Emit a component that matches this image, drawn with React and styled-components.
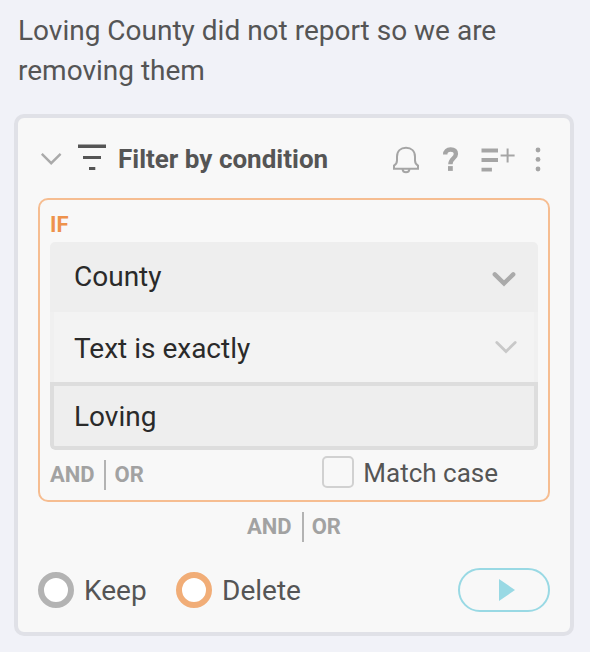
import React from 'react';
import styled, { createGlobalStyle } from 'styled-components';

const GlobalStyle = createGlobalStyle`
  * { box-sizing: border-box; }
  body {
    margin: 0;
    background: #f1f2f8;
    font-family: Roboto, "Liberation Sans", sans-serif;
    color: #555;
  }
`;

const Page = styled.main`
  width: 590px;
  height: 652px;
  padding: 11px 16px 16px 14px;
  background: #f1f2f8;
  overflow: hidden;
`;

const Note = styled.p`
  height: 103px;
  margin: 0;
  padding-left: 4px;
  font-size: 28px;
  line-height: 40px;
`;

const Card = styled.section`
  display: flex;
  flex-direction: column;
  height: 522px;
  padding: 0 20px;
  border: 4px solid #e0e1e7;
  border-radius: 10px;
  background: #f8f8f8;
`;

const Header = styled.header`
  display: flex;
  align-items: center;
  height: 80px;
`;

const Icon = styled.svg`
  display: block;
  flex: none;
  margin-left: ${({ $gap }) => $gap || 0}px;
`;

const Title = styled.h1`
  margin: 2px 0 0 11px;
  font-size: 26px;
  line-height: 36px;
  font-weight: 700;
  white-space: nowrap;
`;

const Actions = styled.div`
  display: flex;
  margin-left: auto;
`;

const Condition = styled.div`
  height: 304px;
  padding: 10px;
  border: 2px solid #f6bd91;
  border-radius: 10px;
`;

const Keyword = styled.div`
  height: 32px;
  font-size: 22px;
  line-height: 30px;
  font-weight: 700;
  color: #ee924c;
`;

const Fields = styled.div`
  border-radius: 5px;
  overflow: hidden;
`;

const Field = styled.div`
  display: flex;
  align-items: center;
  justify-content: space-between;
  height: 70px;
  padding: 0 20px 2px 24px;
  background: #eee;
  font-size: 28px;
  color: #2a2a2a;
`;

const OperatorField = styled(Field)`
  padding: 2px 14px 0 20px;
  border: solid #f0f0f0;
  border-width: 0 4px;
  background: #f3f3f3;
`;

const ValueField = styled(Field)`
  height: 68px;
  padding: 0 20px;
  border: 4px solid #ddd;
  border-radius: 0 0 5px 5px;
`;

const ConditionFooter = styled.div`
  display: flex;
  justify-content: space-between;
  padding: 6px 40px 0 0;
`;

const Joiner = styled.div`
  display: flex;
  align-items: center;
  align-self: ${({ $centered }) => ($centered ? 'center' : 'auto')};
  height: 30px;
  margin-top: ${({ $top }) => $top || 0}px;
  font-size: 22px;
  line-height: 30px;
  font-weight: 700;
  color: #a2a2a2;
`;

const Divider = styled.span`
  width: 2px;
  height: 30px;
  margin: ${({ $centered }) => ($centered ? '0 8px 0 10px' : '0 9px')};
  background: #b3b3b3;
`;

const Check = styled.div`
  display: flex;
  align-items: center;
  height: 32px;
  font-size: 26px;
  line-height: 32px;
`;

const Box = styled.span`
  width: 32px;
  height: 32px;
  margin-right: 9px;
  border: 2px solid #d1d1d1;
  border-radius: 5px;
`;

const CheckLabel = styled.span`
  padding-top: 2px;
`;

const Footer = styled.footer`
  display: flex;
  align-items: center;
  height: 44px;
  margin-top: 26px;
`;

const Choice = styled.div`
  display: flex;
  align-items: center;
  width: 138px;
  font-size: 28px;
`;

const ChoiceLabel = styled.span`
  padding-top: 1px;
  line-height: 33px;
`;

const Radio = styled.span`
  width: 36px;
  height: 36px;
  margin-right: 10px;
  border: 6px solid ${({ $color }) => $color};
  border-radius: 50%;
  background: #fff;
`;

const Run = styled.button`
  display: flex;
  align-items: center;
  justify-content: center;
  width: 92px;
  height: 44px;
  margin-left: auto;
  padding: 0 0 0 5px;
  border: 2px solid #99d9e4;
  border-radius: 22px;
  background: transparent;
`;

function Chevron({ color, weight, drop }) {
  return (
    <Icon width="28" height="22" fill="none" stroke={color} strokeWidth={weight} strokeLinecap="round">
      <path d={`M4.8 ${drop}l9.2 9 9.2-9`} />
    </Icon>
  );
}

function AndOr({ $centered, $top }) {
  return (
    <Joiner $centered={$centered} $top={$top}>
      <span>AND</span>
      <Divider $centered={$centered} />
      <span>OR</span>
    </Joiner>
  );
}

export default function App() {
  return (
    <>
      <GlobalStyle />
      <Page>
        <Note>
          Loving County did not report so we are
          <br />
          removing them
        </Note>
        <Card>
          <Header>
            <Icon width="26" height="40" fill="none" stroke="#aaa" strokeWidth="2.4">
              <path d="M3.8 15.8l9.4 9.4 9.4-9.4" />
            </Icon>
            <Icon $gap={13} width="30" height="40" fill="#555">
              <path d="M1 6.5h28V10H1zM6 18h18v3H6zM12 29h6.3v3H12z" />
            </Icon>
            <Title>Filter by condition</Title>
            <Actions>
              <Icon width="28" height="40" fill="none" stroke="#a5a5a5" strokeWidth="2">
                <path d="M2 30.7v-3.1c2-1.3 3-2.8 3-5.2v-3.7C5 13 8.6 9.8 14 9.8s9 3.2 9 8.9v3.7c0 2.4 1 3.9 3 5.2v3.1z" />
                <path d="M10.6 31c0 2 1.3 3.2 3.4 3.2s3.4-1.2 3.4-3.2" />
              </Icon>
              <Icon $gap={22} width="18" height="40" fill="none" stroke="#a5a5a5" strokeWidth="4.4">
                <path d="M3.2 16.5c0-3.2 2-5 5.4-5s5.3 1.6 5.3 4.5c0 4.3-5.5 4.4-5.5 10.2" />
                <path d="M6 30.5h4.8" strokeWidth="4.8" />
              </Icon>
              <Icon $gap={20} width="36" height="40" fill="#a5a5a5">
                <path d="M1.5 10.5H18v4H1.5zM1.5 20H18v4H1.5zM1.5 29.7h10.4v3.8H1.5z" />
                <path d="M26.6 10.5h2v6h6v2h-6v6h-2v-6h-6v-2h6z" />
              </Icon>
              <Icon $gap={17} width="17" height="40" fill="#a5a5a5">
                <circle cx="5" cy="12" r="2.4" />
                <circle cx="5" cy="21.4" r="2.4" />
                <circle cx="5" cy="31" r="2.4" />
              </Icon>
            </Actions>
          </Header>
          <Condition>
            <Keyword>IF</Keyword>
            <Fields>
              <Field>
                County
                <Chevron color="#aaa" weight="4.4" drop={9.4} />
              </Field>
              <OperatorField>
                Text is exactly
                <Chevron color="#c8c8c8" weight="2.8" drop={5.5} />
              </OperatorField>
              <ValueField>Loving</ValueField>
            </Fields>
            <ConditionFooter>
              <AndOr $top={4} />
              <Check>
                <Box />
                <CheckLabel>Match case</CheckLabel>
              </Check>
            </ConditionFooter>
          </Condition>
          <AndOr $centered $top={10} />
          <Footer>
            <Choice>
              <Radio $color="#b3b3b3" />
              <ChoiceLabel>Keep</ChoiceLabel>
            </Choice>
            <Choice>
              <Radio $color="#f1ad77" />
              <ChoiceLabel>Delete</ChoiceLabel>
            </Choice>
            <Run aria-label="Run">
              <Icon width="16" height="22" fill="#99d9e4">
                <path d="M0 0l16 11L0 22z" />
              </Icon>
            </Run>
          </Footer>
        </Card>
      </Page>
    </>
  );
}
